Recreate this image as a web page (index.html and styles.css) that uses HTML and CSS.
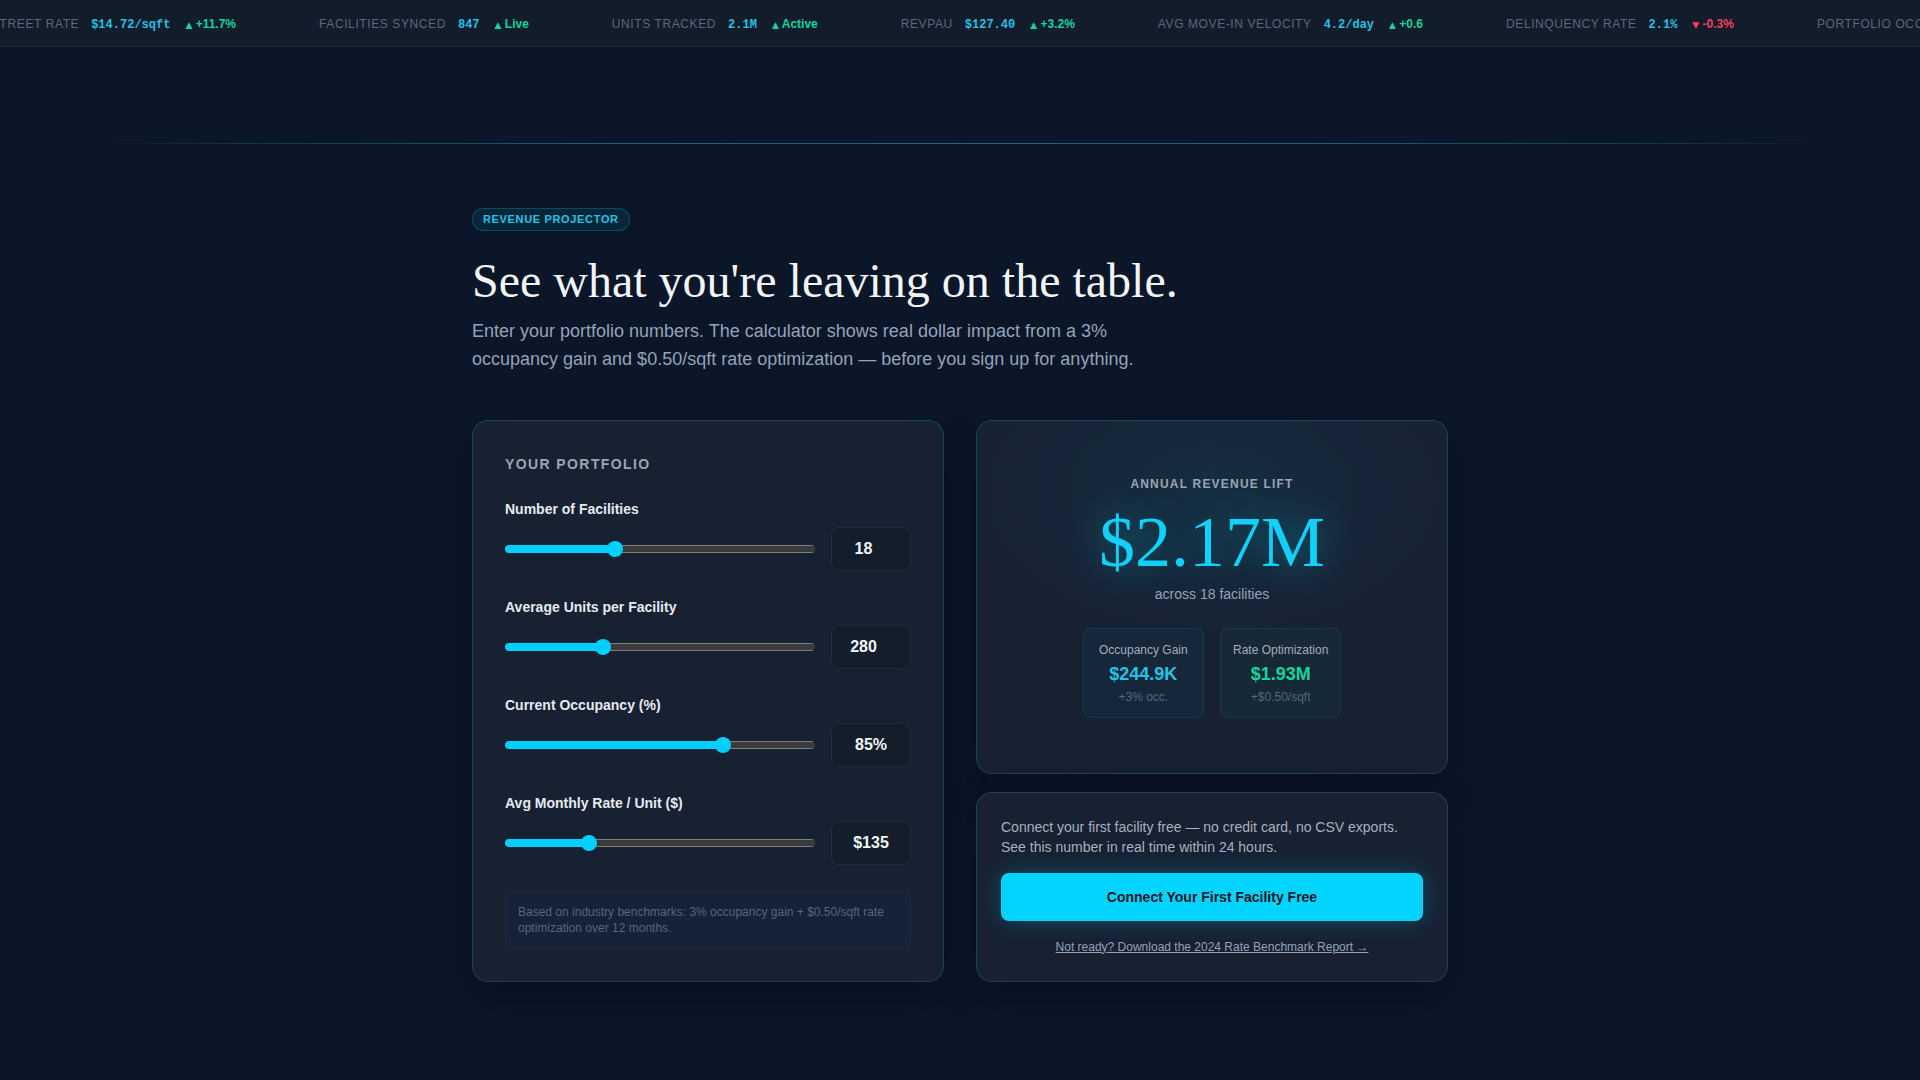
FILE: index.html
```html
<!DOCTYPE html>
<html lang="en">
<head>
<meta charset="utf-8">
<title>Revenue Projector</title>
<link rel="stylesheet" href="styles.css">
</head>
<body>
<div class="ticker">
  <div class="ticker-track">
    <div class="tick"><span class="tick-label">Street Rate</span><span class="tick-value">$14.72/sqft</span><span class="tick-change"><span class="arrow">▲</span> +11.7%</span></div>
    <div class="tick"><span class="tick-label">Facilities Synced</span><span class="tick-value">847</span><span class="tick-change"><span class="arrow">▲</span> Live</span></div>
    <div class="tick"><span class="tick-label">Units Tracked</span><span class="tick-value">2.1M</span><span class="tick-change"><span class="arrow">▲</span> Active</span></div>
    <div class="tick"><span class="tick-label">RevPAU</span><span class="tick-value">$127.40</span><span class="tick-change"><span class="arrow">▲</span> +3.2%</span></div>
    <div class="tick"><span class="tick-label">Avg Move-In Velocity</span><span class="tick-value">4.2/day</span><span class="tick-change"><span class="arrow">▲</span> +0.6</span></div>
    <div class="tick"><span class="tick-label">Delinquency Rate</span><span class="tick-value">2.1%</span><span class="tick-change down"><span class="arrow">▼</span> -0.3%</span></div>
    <div class="tick"><span class="tick-label">Portfolio Occupancy</span><span class="tick-value">87.3%</span><span class="tick-change"><span class="arrow">▲</span> +1.2%</span></div>
  </div>
</div>

<div class="divider"></div>

<main class="section">
  <span class="badge">REVENUE PROJECTOR</span>
  <h1 class="headline">See what you're leaving on the table.</h1>
  <p class="lead">Enter your portfolio numbers. The calculator shows real dollar impact from a 3% occupancy gain and $0.50/sqft rate optimization — before you sign up for anything.</p>

  <div class="calc">
    <section class="card portfolio">
      <h2 class="card-title">YOUR PORTFOLIO</h2>

      <div class="field">
        <label class="field-label">Number of Facilities</label>
        <div class="field-row">
          <input class="range" type="range" min="1" max="50" value="18" style="--p:35.5%">
          <input class="num" type="number" value="18">
        </div>
      </div>

      <div class="field">
        <label class="field-label">Average Units per Facility</label>
        <div class="field-row">
          <input class="range" type="range" min="50" max="800" value="280" style="--p:31.7%">
          <input class="num" type="number" value="280">
        </div>
      </div>

      <div class="field">
        <label class="field-label">Current Occupancy (%)</label>
        <div class="field-row">
          <input class="range" type="range" min="50" max="99" value="85" style="--p:70.3%">
          <input class="num" type="text" value="85%">
        </div>
      </div>

      <div class="field">
        <label class="field-label">Avg Monthly Rate / Unit ($)</label>
        <div class="field-row">
          <input class="range" type="range" min="60" max="350" value="135" style="--p:27.1%">
          <input class="num" type="text" value="$135">
        </div>
      </div>

      <div class="note">Based on industry benchmarks: 3% occupancy gain + $0.50/sqft rate optimization over 12 months.</div>
    </section>

    <div class="side">
      <section class="card result">
        <div class="result-label">ANNUAL REVENUE LIFT</div>
        <div class="result-value">$2.17M</div>
        <div class="result-sub">across 18 facilities</div>
        <div class="breakdown">
          <div class="mini occ">
            <div class="mini-label">Occupancy Gain</div>
            <div class="mini-value">$244.9K</div>
            <div class="mini-sub">+3% occ.</div>
          </div>
          <div class="mini rate">
            <div class="mini-label">Rate Optimization</div>
            <div class="mini-value">$1.93M</div>
            <div class="mini-sub">+$0.50/sqft</div>
          </div>
        </div>
      </section>

      <section class="card cta">
        <p class="cta-text">Connect your first facility free — no credit card, no CSV exports. See this number in real time within 24 hours.</p>
        <button class="cta-button" type="button">Connect Your First Facility Free</button>
        <a class="cta-link" href="#">Not ready? Download the 2024 Rate Benchmark Report →</a>
      </section>
    </div>
  </div>
</main>
</body>
</html>
```

FILE: styles.css
```css
* { box-sizing: border-box; }

html, body { margin: 0; padding: 0; }

body {
  background: #0b1628;
  color: #e2e8f0;
  font-family: "Liberation Sans", Arial, sans-serif;
  min-height: 1080px;
  overflow: hidden;
}

/* Ticker */
.ticker {
  height: 47px;
  padding-top: 2px;
  background: #131c2b;
  border-bottom: 1px solid #1b2535;
  display: flex;
  align-items: center;
  overflow: hidden;
}

.ticker-track {
  display: flex;
  gap: 83px;
  white-space: nowrap;
  margin-left: -9px;
}

.tick {
  display: flex;
  align-items: baseline;
  gap: 12px;
  flex: none;
}

.tick-label {
  font-size: 12px;
  letter-spacing: 0.05em;
  color: #5a687b;
  text-transform: uppercase;
}

.tick-value {
  font-family: "Liberation Mono", "DejaVu Sans Mono", monospace;
  font-weight: 700;
  font-size: 12px;
  color: #22c3e6;
}

.tick-change {
  margin-left: 3px;
  font-size: 12px;
  font-weight: 700;
  color: #12d69d;
}

.tick-change .arrow {
  font-family: "DejaVu Sans", sans-serif;
  font-size: 9px;
}

.tick-change.down { color: #f0435f; }

.divider {
  height: 1px;
  margin: 96px 5% 0;
  background: linear-gradient(90deg, rgba(34,197,232,0) 0%, rgba(34,197,232,0.16) 8%, rgba(34,197,232,0.45) 30%, rgba(34,197,232,0.48) 50%, rgba(34,197,232,0.45) 70%, rgba(34,197,232,0.16) 92%, rgba(34,197,232,0) 100%);
}

/* Section */
.section {
  max-width: 1024px;
  margin: 0 auto;
  padding: 64px 24px;
}

.badge {
  display: inline-block;
  font-size: 11px;
  font-weight: 700;
  letter-spacing: 0.06em;
  line-height: 13px;
  color: #22c5e8;
  padding: 4px 10px;
  background: rgba(0, 212, 255, 0.08);
  border: 1px solid rgba(0, 212, 255, 0.22);
  border-radius: 999px;
}

.headline {
  font-family: "Liberation Serif", "Times New Roman", serif;
  font-weight: 400;
  font-size: 48px;
  line-height: 1.2;
  color: #f1f5f9;
  margin: 21px 0 7px;
}

.lead {
  font-size: 18px;
  line-height: 28px;
  color: #94a3b8;
  max-width: 680px;
  margin: 0 0 47px;
}

/* Calculator */
.calc {
  display: grid;
  grid-template-columns: 1fr 1fr;
  gap: 32px;
}

.card {
  background: #172132;
  border: 1px solid rgba(34, 211, 238, 0.2);
  border-radius: 16px;
  box-shadow: 0 16px 40px rgba(0, 0, 0, 0.25);
}

.portfolio { padding: 32px; }

.card-title {
  margin: 0 0 24px;
  font-size: 14px;
  line-height: 22px;
  font-weight: 700;
  letter-spacing: 0.1em;
  color: #9aa4b2;
}

.field { margin-bottom: 26px; }

.field-label {
  display: block;
  font-size: 14px;
  line-height: 20px;
  font-weight: 700;
  color: #e5eaf1;
  margin-bottom: 8px;
}

.field-row {
  display: flex;
  align-items: center;
  gap: 16px;
}

.range {
  -webkit-appearance: none;
  appearance: none;
  flex: 1;
  min-width: 0;
  height: 16px;
  margin: 0;
  background: transparent;
}

.range::-webkit-slider-runnable-track {
  height: 8px;
  border-radius: 4px;
  background:
    linear-gradient(90deg, #00d0ff 0, #00d0ff var(--p), transparent var(--p)),
    linear-gradient(180deg, #7c7c7c 0, #7c7c7c 1px, #3b3b3b 1px, #3b3b3b 7px, #7c7c7c 7px);
}

.range::-webkit-slider-thumb {
  -webkit-appearance: none;
  appearance: none;
  width: 16px;
  height: 16px;
  margin-top: -4px;
  border-radius: 50%;
  background: #00d0ff;
  border: none;
}

.num {
  width: 80px;
  height: 44px;
  flex: none;
  background: #141d2b;
  border: 1px solid #212b3b;
  border-radius: 8px;
  color: #f1f5f9;
  font-family: "Liberation Sans", Arial, sans-serif;
  font-size: 16px;
  font-weight: 700;
  text-align: center;
  padding: 0 8px;
}

.note {
  margin-top: 23px;
  padding: 12px;
  font-size: 12px;
  line-height: 16px;
  color: #56667b;
  background: #152238;
  border: 1px solid rgba(255, 255, 255, 0.04);
  border-radius: 8px;
}

.side {
  display: flex;
  flex-direction: column;
  gap: 18px;
}

.result {
  flex: 1;
  display: flex;
  flex-direction: column;
  align-items: center;
  justify-content: center;
  text-align: center;
  padding: 32px;
  background:
    radial-gradient(ellipse 55% 45% at 50% 20%, rgba(0, 212, 255, 0.07), rgba(0, 212, 255, 0) 100%),
    #172132;
}

.result-label {
  font-size: 12px;
  line-height: 16px;
  font-weight: 700;
  letter-spacing: 0.1em;
  color: #9aa5b4;
}

.result-value {
  margin-top: 14px;
  font-family: "Liberation Serif", "Times New Roman", serif;
  font-size: 72px;
  line-height: 72px;
  color: #0fd2fb;
  text-shadow: 0 0 36px rgba(0, 212, 255, 0.45);
}

.result-sub {
  margin-top: 6px;
  font-size: 14px;
  line-height: 20px;
  color: #94a3b8;
}

.breakdown {
  margin-top: 24px;
  display: grid;
  grid-template-columns: 1fr 1fr;
  gap: 16px;
  width: max-content;
}

.mini {
  padding: 12px;
  border-radius: 8px;
  border: 1px solid rgba(0, 212, 255, 0.1);
  background: rgba(0, 212, 255, 0.04);
}

.mini.rate {
  border-color: rgba(16, 217, 160, 0.1);
  background: rgba(16, 217, 160, 0.04);
}

.mini-label {
  font-size: 12px;
  line-height: 18px;
  color: #a3adbb;
}

.mini-value {
  margin-top: 4px;
  font-size: 18px;
  line-height: 22px;
  font-weight: 700;
  color: #22c3e6;
}

.mini.rate .mini-value { color: #14d69a; }

.mini-sub {
  margin-top: 4px;
  font-size: 12px;
  line-height: 16px;
  color: #56667b;
}

.cta { padding: 24px; }

.cta-text {
  margin: 0 0 16px;
  font-size: 14px;
  line-height: 20px;
  color: #a7b1bf;
}

.cta-button {
  display: block;
  width: 100%;
  height: 48px;
  border: none;
  border-radius: 8px;
  background: #00d4ff;
  color: #0b1628;
  font-family: "Liberation Sans", Arial, sans-serif;
  font-size: 14px;
  font-weight: 700;
  box-shadow: 0 0 24px rgba(0, 212, 255, 0.25);
}

.cta-link {
  display: block;
  margin-top: 16px;
  text-align: center;
  font-size: 12px;
  line-height: 20px;
  color: #94a3b8;
  text-decoration: underline;
}
```
